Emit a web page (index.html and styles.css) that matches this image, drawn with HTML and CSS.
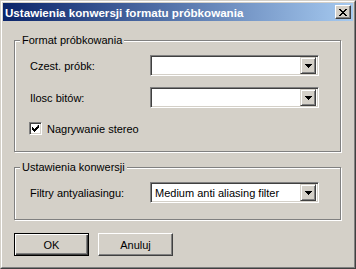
FILE: index.html
```html
<!DOCTYPE html>
<html>
<head>
<meta charset="utf-8">
<link rel="stylesheet" href="styles.css">
</head>
<body>
<div class="window">
  <div class="frame">
    <div class="titlebar">
      <span class="title">Ustawienia konwersji formatu próbkowania</span>
      <span class="close"><svg width="8" height="7" viewBox="0 0 8 7"><path d="M0 0h2v1h1v1h2v-1h1v-1h2v1h-1v1h-1v1h-1v1h1v1h1v1h1v1h-2v-1h-1v-1h-2v1h-1v1h-2v-1h1v-1h1v-1h1v-1h-1v-1h-1v-1h-1z" fill="#000"/></svg></span>
    </div>
    <div class="content">
      <fieldset class="group">
        <legend>Format próbkowania</legend>
        <div class="group-body">
          <div class="row">
            <span class="lbl">Czest. próbk:</span>
            <div class="combo"><span class="combo-text"></span><span class="drop"><svg width="7" height="4" viewBox="0 0 7 4"><path d="M0 0h7v1h-1v1h-1v1h-1v1h-1v-1h-1v-1h-1v-1h-1z" fill="#000"/></svg></span></div>
          </div>
          <div class="row row-gap">
            <span class="lbl">Ilosc bitów:</span>
            <div class="combo"><span class="combo-text"></span><span class="drop"><svg width="7" height="4" viewBox="0 0 7 4"><path d="M0 0h7v1h-1v1h-1v1h-1v1h-1v-1h-1v-1h-1v-1h-1z" fill="#000"/></svg></span></div>
          </div>
          <div class="check-row">
            <span class="checkbox"><svg width="7" height="7" viewBox="0 0 7 7"><path d="M6 0h1v3h-1v1h-1v1h-1v1h-1v1h-1v-1h-1v-1h-1v-3h1v1h1v1h1v-1h1v-1h1z" fill="#000"/></svg></span>
            <span class="check-label">Nagrywanie stereo</span>
          </div>
        </div>
      </fieldset>
      <fieldset class="group group2">
        <legend>Ustawienia konwersji</legend>
        <div class="group-body body2">
          <div class="row">
            <span class="lbl">Filtry antyaliasingu:</span>
            <div class="combo"><span class="combo-text">Medium anti aliasing filter</span><span class="drop"><svg width="7" height="4" viewBox="0 0 7 4"><path d="M0 0h7v1h-1v1h-1v1h-1v1h-1v-1h-1v-1h-1v-1h-1z" fill="#000"/></svg></span></div>
          </div>
        </div>
      </fieldset>
      <div class="buttons">
        <button class="btn btn-default">OK</button>
        <button class="btn">Anuluj</button>
      </div>
    </div>
  </div>
</div>
</body>
</html>
```

FILE: styles.css
```css
html, body {
  margin: 0;
  padding: 0;
  background: #d4d0c8;
}
body {
  font-family: "Liberation Sans", Arial, sans-serif;
  font-size: 11px;
  color: #000;
}
.window {
  width: 356px;
  height: 269px;
  box-sizing: border-box;
  border: 1px solid;
  border-color: #d4d0c8 #404040 #404040 #d4d0c8;
  background: #d4d0c8;
}
.frame {
  height: 100%;
  box-sizing: border-box;
  border: 1px solid;
  border-color: #fff #808080 #808080 #fff;
  padding: 1px;
  display: flex;
  flex-direction: column;
}
.titlebar {
  height: 18px;
  flex: none;
  display: flex;
  align-items: center;
  justify-content: space-between;
  background: linear-gradient(to right, #0a246a, #a6caf0);
  padding: 0 2px 0 2px;
}
.title {
  color: #fff;
  font-weight: bold;
  font-size: 11.6px;
  white-space: nowrap;
}
.close {
  width: 16px;
  height: 14px;
  box-sizing: border-box;
  border: 1px solid;
  border-color: #fff #404040 #404040 #fff;
  box-shadow: inset -1px -1px 0 #808080;
  background: #d4d0c8;
  display: flex;
  align-items: center;
  justify-content: center;
  padding-right: 1px;
}
.close svg { display: block; }
.content {
  padding: 13px 12px 0 11px;
  display: flex;
  flex-direction: column;
}
.group {
  margin: 0;
  padding: 0;
  min-width: 0;
  border: 1px solid #808080;
  box-shadow: inset 1px 1px 0 #fff, 1px 1px 0 #fff;
}
.group legend {
  margin-left: 5px;
  padding: 0 2px;
  line-height: 13px;
  background: #d4d0c8;
}
.group2 {
  margin-top: 9px;
}
.group-body {
  padding: 8px 0 16px 15px;
  display: flex;
  flex-direction: column;
}
.row {
  display: flex;
  align-items: center;
  height: 21px;
}
.row-gap {
  margin-top: 11px;
}
.lbl {
  width: 120px;
  flex: none;
}
.combo {
  width: 169px;
  height: 21px;
  box-sizing: border-box;
  border: 1px solid;
  border-color: #808080 #fff #fff #808080;
  box-shadow: inset 1px 1px 0 #404040, inset -1px -1px 0 #d4d0c8;
  background: #fff;
  display: flex;
  align-items: center;
  padding: 2px;
}
.combo-text {
  flex: 1;
  padding-left: 2px;
  white-space: nowrap;
}
.drop {
  width: 16px;
  height: 17px;
  box-sizing: border-box;
  border: 1px solid;
  border-color: #d4d0c8 #404040 #404040 #d4d0c8;
  box-shadow: inset 1px 1px 0 #fff, inset -1px -1px 0 #808080;
  background: #d4d0c8;
  display: flex;
  align-items: center;
  justify-content: center;
}
.drop svg { display: block; }
.check-row {
  display: flex;
  align-items: center;
  height: 13px;
  margin-top: 14px;
}
.checkbox {
  width: 13px;
  height: 13px;
  box-sizing: border-box;
  border: 1px solid;
  border-color: #808080 #fff #fff #808080;
  box-shadow: inset 1px 1px 0 #404040, inset -1px -1px 0 #d4d0c8;
  background: #fff;
  display: flex;
  align-items: center;
  justify-content: center;
  margin-left: -1px;
}
.checkbox svg { display: block; }
.check-label {
  margin-left: 5px;
}
.buttons {
  margin-top: 13px;
  display: flex;
  gap: 9px;
}
.btn {
  width: 75px;
  height: 23px;
  box-sizing: border-box;
  margin: 0;
  padding: 0;
  font-family: "Liberation Sans", Arial, sans-serif;
  font-size: 11px;
  color: #000;
  background: #d4d0c8;
  border: 1px solid;
  border-color: #fff #404040 #404040 #fff;
  box-shadow: inset -1px -1px 0 #808080;
}
.btn-default {
  border: 1px solid #000;
  box-shadow: inset 1px 1px 0 #fff, inset -1px -1px 0 #404040, inset -2px -2px 0 #808080;
}
```
